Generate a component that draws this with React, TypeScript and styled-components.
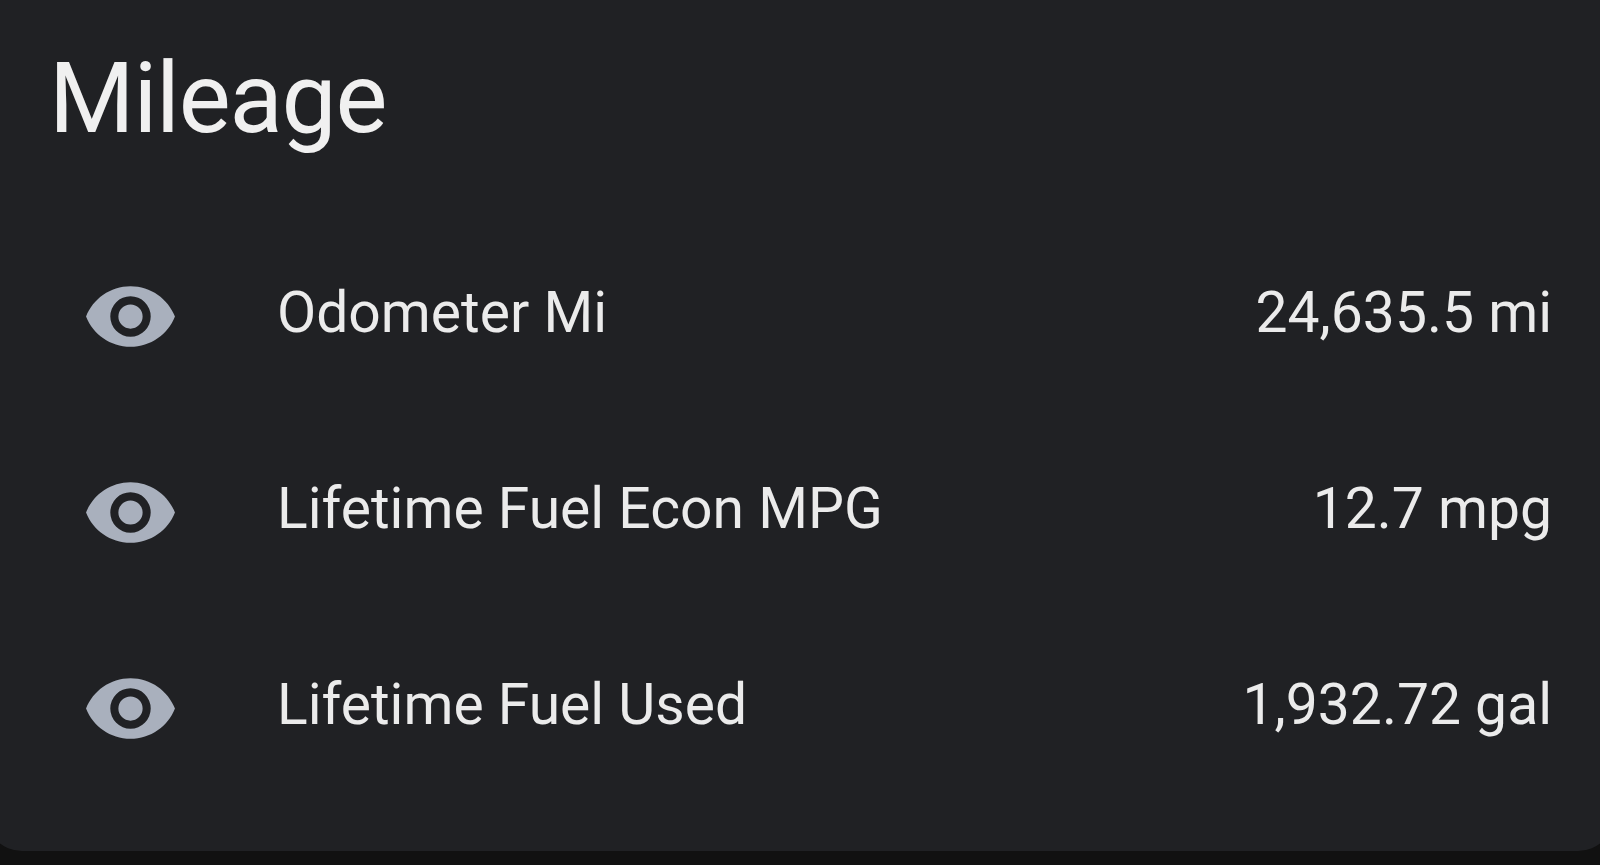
import React from 'react';
import styled, { createGlobalStyle } from 'styled-components';

const GlobalStyles = createGlobalStyle`
  * {
    box-sizing: border-box;
  }

  body {
    margin: 0;
    background: #111111;
    font-family: Roboto, sans-serif;
    color: #ebebeb;
  }
`

const Wrapper = styled.div`
  height: 865px;
  overflow: hidden;
`

const Card = styled.section`
  height: 851px;
  margin: 0 -14px;
  padding: 34px 62px 0 63px;
  background: #202124;
  border-radius: 0 0 36px 36px;
`

const Title = styled.h1`
  margin: 0 0 84px;
  color: #f0f0f0;
  font-size: 98px;
  font-weight: 400;
  line-height: 130px;
  letter-spacing: -0.012em;
`

const Row = styled.div`
  display: flex;
  align-items: center;
  height: 130px;
  margin-bottom: 66px;
  font-size: 57px;
  line-height: 80px;
`

const Icon = styled.svg`
  flex: none;
  width: 97px;
  height: 97px;
  margin: 7px 98px 0 33px;
  fill: #a9b0bd;
`

const Name = styled.span`
  flex: 1;
`

const Value = styled.span`
  text-align: right;
`

const sensors = [
  { name: 'Odometer Mi', value: '24,635.5 mi' },
  { name: 'Lifetime Fuel Econ MPG', value: '12.7 mpg' },
  { name: 'Lifetime Fuel Used', value: '1,932.72 gal' },
]

export default function App(){
  return(
    <Wrapper>
      <GlobalStyles />
      <Card>
        <Title>Mileage</Title>
        {sensors.map(({ name, value }) => (
          <Row key={name}>
            <Icon viewBox='0 0 24 24'>
              <path d='M12,9A3,3 0 0,0 9,12A3,3 0 0,0 12,15A3,3 0 0,0 15,12A3,3 0 0,0 12,9M12,17A5,5 0 0,1 7,12A5,5 0 0,1 12,7A5,5 0 0,1 17,12A5,5 0 0,1 12,17M12,4.5C7,4.5 2.73,7.61 1,12C2.73,16.39 7,19.5 12,19.5C17,19.5 21.27,16.39 23,12C21.27,7.61 17,4.5 12,4.5Z' />
            </Icon>
            <Name>{name}</Name>
            <Value>{value}</Value>
          </Row>
        ))}
      </Card>
    </Wrapper>
  )
}
